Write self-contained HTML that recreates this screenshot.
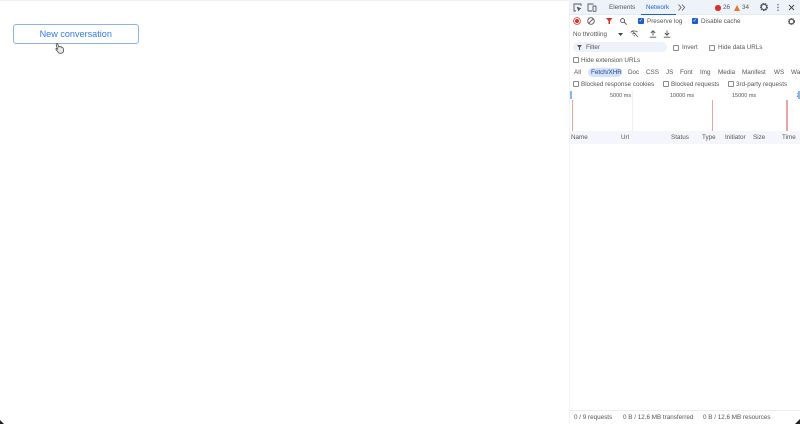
<!DOCTYPE html>
<html><head><meta charset="utf-8"><style>
html,body{margin:0;padding:0;background:#fff}
#r{position:relative;width:800px;height:424px;overflow:hidden;background:#fff;font-family:"Liberation Sans",sans-serif;color:#555;font-size:6.3px;filter:blur(.3px)}
.t{position:absolute;white-space:nowrap;line-height:12px;height:12px;transform:translateY(1px)}
.b{position:absolute}
.c{position:absolute;width:4px;height:4px;border:1px solid #8a8a8a;border-radius:1px;background:#fff}
.k{position:absolute;width:6px;height:6px;border-radius:1px;background:#1a5fc8;color:#fff;font-size:5.500px;line-height:6px;text-align:center}
svg{position:absolute;overflow:visible}
</style></head><body><div id="r">
<div class="b" style="left:0;top:0;width:569px;height:1px;background:#f0f2f7"></div>
<div class="b" style="left:13px;top:24px;width:123.500px;height:18px;border:1px solid #8ab4ee;border-radius:3px;text-align:center;color:#2f7bec;font-size:9.100px;line-height:18px">New conversation</div>
<svg style="left:54px;top:43px" width="11" height="11" viewBox="0 0 11 11"><path d="M2.500 .8c.7-.4 1.300 0 1.500.7l.8 2.400.6-.3c.5-.2 1 0 1.200.3.6-.2 1 0 1.200.4.7-.1 1.200.3 1.400 1l.4 2.200c.1.900-.5 2.200-1.800 2.600-1.500.4-3 .1-3.600-.8L2 6.500c-.4-.6.2-1.200.9-.8l.6.4-1.200-3.900C2.100 1.600 2.100 1 2.500.8z" fill="#e8e8e8" stroke="#444" stroke-width=".8"/></svg>

<div class="b" style="left:569px;top:0;width:1px;height:424px;background:#f0f2f7"></div>
<div class="b" style="left:570px;top:0;width:230px;height:14px;background:#eef2f9"></div>
<div class="b" style="left:570px;top:14px;width:230px;height:1px;background:#e4e9f2"></div>
<svg style="left:573px;top:3px" width="9" height="9" fill="none" stroke="#555"><path d="M3 8H1V1h7v2" stroke-width=".9"/><path d="M4 4l4 1.500-1.600.8L5.600 8z" fill="#555" stroke-width=".5"/></svg>
<svg style="left:587px;top:3px" width="10" height="9" fill="none" stroke="#555" stroke-width=".9"><path d="M1 8V1h5.500M5 8H1"/><rect x="6" y="3" width="3" height="5.300" rx=".5"/></svg>
<div class="t" style="left:609px;top:1px;color:#555">Elements</div>
<div class="t" style="left:646px;top:1px;color:#1a62d0">Network</div>
<div class="b" style="left:641px;top:13.500px;width:35px;height:1.500px;background:#1a62d0"></div>
<svg style="left:678px;top:4px" width="8" height="7" fill="none" stroke="#555" stroke-width=".8"><path d="M.5 .5l2.600 3-2.600 3M4 .5l2.600 3-2.600 3"/></svg>
<div class="b" style="left:715px;top:5px;width:5.500px;height:5.500px;border-radius:50%;background:#d9302a"></div>
<div class="t" style="left:723px;top:1px">26</div>
<svg style="left:734px;top:4.500px" width="7" height="6"><path d="M3 0L6 6H0z" fill="#e8762c"/></svg>
<div class="t" style="left:742px;top:1px">34</div>
<svg style="left:760px;top:3px" width="8" height="8"><circle cx="4" cy="4" r="3.100" fill="none" stroke="#555" stroke-width="1.800" stroke-dasharray="1.500 .6"/><circle cx="4" cy="4" r="2.600" fill="none" stroke="#555" stroke-width=".9"/></svg>
<svg style="left:777px;top:4px" width="2" height="7" fill="#555"><circle cx="1" cy=".8" r=".7"/><circle cx="1" cy="3.500" r=".7"/><circle cx="1" cy="6.200" r=".7"/></svg>
<svg style="left:788.500px;top:5px" width="5" height="5" stroke="#444" stroke-width=".9"><path d="M0 0l5 5M5 0L0 5"/></svg>

<svg style="left:573px;top:17px" width="8" height="8"><circle cx="4" cy="4" r="3.400" fill="none" stroke="#d9302a" stroke-width=".8"/><circle cx="4" cy="4" r="2" fill="#d9302a"/></svg>
<svg style="left:587px;top:17px" width="8" height="8" fill="none" stroke="#555" stroke-width=".9"><circle cx="4" cy="4" r="3.300"/><path d="M1.700 6.300l4.600-4.600"/></svg>
<svg style="left:606px;top:18px" width="7" height="6"><path d="M0 0h6.500L4 3v3H2.500V3z" fill="#d9302a"/></svg>
<svg style="left:620px;top:17.500px" width="7" height="7" fill="none" stroke="#555" stroke-width=".9"><circle cx="2.600" cy="2.600" r="2"/><path d="M4.200 4.200L6.700 6.700"/></svg>
<div class="k" style="left:638px;top:18px">✓</div><div class="t" style="left:647px;top:15px">Preserve log</div>
<div class="k" style="left:692px;top:18px">✓</div><div class="t" style="left:701px;top:15px">Disable cache</div>
<svg style="left:787.500px;top:17.500px" width="7" height="7"><circle cx="3.500" cy="3.500" r="2.700" fill="none" stroke="#555" stroke-width="1.600" stroke-dasharray="1.300 .6"/><circle cx="3.500" cy="3.500" r="2.200" fill="none" stroke="#555" stroke-width=".9"/></svg>

<div class="t" style="left:573px;top:28px">No throttling</div>
<svg style="left:618px;top:32.500px" width="5" height="3"><path d="M0 0h5L2.500 3z" fill="#444"/></svg>
<svg style="left:630px;top:30px" width="9" height="8" fill="none" stroke="#555" stroke-width=".8"><path d="M.5 2.500C2.500 .5 5 .5 7.500 2M2 4.200c1.300-1 2.700-1 4 0M3.500 6c.5-.4 1-.4 1.500 0M2 .5l6 6.500"/></svg>
<svg style="left:649px;top:30px" width="8" height="8" fill="none" stroke="#555" stroke-width=".9"><path d="M4 5.500V.8M1.800 3L4 .8 6.200 3M.8 7.200h6.400"/></svg>
<svg style="left:663px;top:30px" width="8" height="8" fill="none" stroke="#555" stroke-width=".9"><path d="M4 .5v4.700M1.800 3L4 5.200 6.200 3M.8 7.200h6.400"/></svg>

<div class="b" style="left:573px;top:42px;width:94px;height:10px;border-radius:5px;background:#edf2fa"></div>
<svg style="left:577px;top:44.500px" width="5" height="5"><path d="M0 0h5L3 2.500V5H2V2.500z" fill="#555"/></svg>
<div class="t" style="left:586px;top:41px">Filter</div>
<div class="c" style="left:673px;top:44.500px"></div><div class="t" style="left:682px;top:41px">Invert</div>
<div class="c" style="left:709px;top:44.500px"></div><div class="t" style="left:718px;top:41px">Hide data URLs</div>

<div class="c" style="left:572.500px;top:57px"></div><div class="t" style="left:581px;top:54px">Hide extension URLs</div>

<div class="b" style="left:588px;top:67.500px;width:34px;height:9px;border-radius:4.500px;background:#d3e3fd"></div>
<div class="t" style="left:574px;top:66px">All</div>
<div class="t" style="left:591px;top:66px;color:#1f3f73">Fetch/XHR</div>
<div class="t" style="left:628px;top:66px">Doc</div>
<div class="t" style="left:646px;top:66px">CSS</div>
<div class="t" style="left:666px;top:66px">JS</div>
<div class="t" style="left:680px;top:66px">Font</div>
<div class="t" style="left:700px;top:66px">Img</div>
<div class="t" style="left:718px;top:66px">Media</div>
<div class="t" style="left:742px;top:66px">Manifest</div>
<div class="t" style="left:774px;top:66px">WS</div>
<div class="t" style="left:791px;top:66px">Wa</div>

<div class="c" style="left:572.500px;top:81px"></div><div class="t" style="left:581px;top:78px">Blocked response cookies</div>
<div class="c" style="left:662.500px;top:81px"></div><div class="t" style="left:671px;top:78px">Blocked requests</div>
<div class="c" style="left:727.500px;top:81px"></div><div class="t" style="left:736px;top:78px">3rd-party requests</div>

<div class="t" style="left:610px;top:89px;font-size:5.500px">5000 ms</div>
<div class="t" style="left:670px;top:89px;font-size:5.500px">10000 ms</div>
<div class="t" style="left:732px;top:89px;font-size:5.500px">15000 ms</div>
<div class="t" style="left:796.500px;top:89px;font-size:5.500px">2</div>
<div class="b" style="left:570px;top:91px;width:1.500px;height:8px;background:#8ab4ee"></div>
<div class="b" style="left:798px;top:91px;width:2px;height:8px;background:#8ab4ee"></div>
<div class="b" style="left:632px;top:91px;width:1px;height:40px;background:#eef1f7"></div>
<div class="b" style="left:572px;top:100px;width:1px;height:31px;background:#eaa5a1"></div>
<div class="b" style="left:712px;top:100px;width:1px;height:31px;background:#eaa5a1"></div>
<div class="b" style="left:786px;top:100px;width:1.500px;height:31px;background:#eaa5a1"></div>
<div class="b" style="left:570px;top:131px;width:230px;height:13px;background:#f4f6fb"></div>
<div class="t" style="left:571px;top:131px">Name</div>
<div class="t" style="left:621px;top:131px">Url</div>
<div class="t" style="left:671px;top:131px">Status</div>
<div class="t" style="left:702px;top:131px">Type</div>
<div class="t" style="left:725px;top:131px">Initiator</div>
<div class="t" style="left:753px;top:131px">Size</div>
<div class="t" style="left:782px;top:131px">Time</div>

<div class="b" style="left:570px;top:410px;width:230px;height:1px;background:#e9edf5"></div>
<div class="t" style="left:574px;top:411px">0 / 9 requests</div>
<div class="t" style="left:623px;top:411px">0 B / 12.6 MB transferred</div>
<div class="t" style="left:703px;top:411px">0 B / 12.6 MB resources</div>
<svg style="left:795px;top:419px" width="5" height="5"><path d="M5 0V5H0z" fill="#222"/></svg>
<svg style="left:0;top:420px" width="4" height="4"><path d="M0 0V4H4z" fill="#222"/></svg>
</div></body></html>
